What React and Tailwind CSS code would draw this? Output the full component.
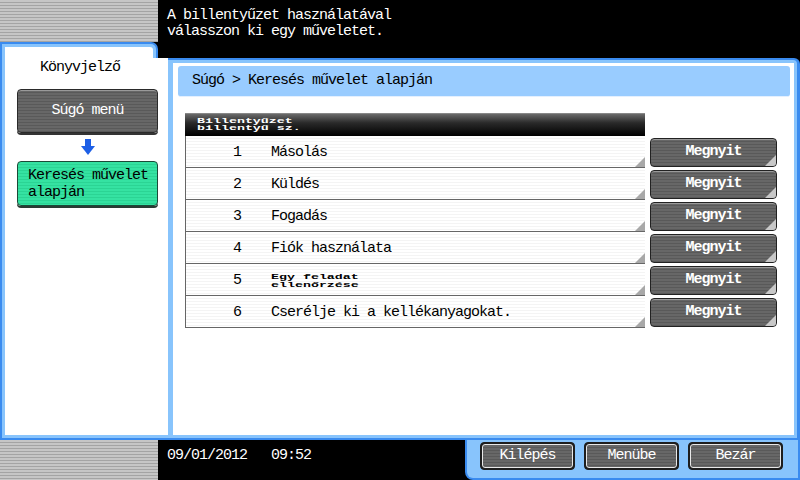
import React from 'react'

const greyStripes =
  'bg-[image:repeating-linear-gradient(to_bottom,#c6c6c6_0px,#c6c6c6_2px,#a4a4a4_2px,#a4a4a4_3px)]'
const btnStripes =
  'bg-[image:repeating-linear-gradient(to_bottom,#676767_0px,#676767_2px,#595959_2px,#595959_3px)]'
const rowStripes =
  'bg-[image:repeating-linear-gradient(to_bottom,#ffffff_0px,#ffffff_2px,#f4f4f4_2px,#f4f4f4_3px)]'

const rows = [
  { n: 1, label: 'Másolás' },
  { n: 2, label: 'Küldés' },
  { n: 3, label: 'Fogadás' },
  { n: 4, label: 'Fiók használata' },
  { n: 5, label: ['Egy feladat', 'ellenőrzése'], small: true },
  { n: 6, label: 'Cserélje ki a kellékanyagokat.' },
]

// little folded corner in the bottom right of cells and keys
const Corner = ({ color = 'bg-[#b8b8b8]', size = 'w-[10px] h-[10px]' }) => (
  <div className={`absolute right-0 bottom-0 ${size} ${color} [clip-path:polygon(100%_0,100%_100%,0_100%)]`} />
)

const Squished = ({ lines, className = '' }) => (
  <div className={`text-[13.3px] tracking-normal leading-[13px] scale-y-[0.55] ${className}`}>
    {lines.map((l) => (
      <div key={l}>{l}</div>
    ))}
  </div>
)

const BottomKey = ({ children }) => (
  <button className="w-[95px] h-[28px] rounded-[4px] border border-[#1e1e1e] bg-[#1e1e1e] p-[1px]">
    <div className={`h-full w-full rounded-[3px] border border-[#e8e8e8] ${btnStripes} flex items-center justify-center text-white`}>
      {children}
    </div>
  </button>
)

export default function App() {
  return (
    <div className="w-[800px] h-[480px] flex flex-col bg-black overflow-hidden font-['Liberation_Mono',monospace] text-[15px] tracking-[-1px]">
      {/* Top message bar */}
      <div className="flex h-[42px] shrink-0">
        <div className={`w-[158px] ${greyStripes}`} />
        <div className="flex-1 bg-black text-white pl-[9px] pt-[8px] leading-[16px]">
          <div>A billentyűzet használatával</div>
          <div>válasszon ki egy műveletet.</div>
        </div>
      </div>

      {/* Frame */}
      <div className="flex h-[398px] shrink-0">
        {/* Left bookmark tab */}
        <div className="w-[168px] flex flex-col">
          <div className="flex h-[16px] shrink-0">
            <div className="w-[158px] bg-[#3a8bef] pt-[2px] pl-[2px] pr-[2px] rounded-tr-[7px]">
              <div className="h-full bg-[#88c4fc] pt-[3px] pl-[3px] pr-[3px] rounded-tr-[5px]">
                <div className="h-full bg-white rounded-tr-[3px]" />
              </div>
            </div>
            <div className="flex-1 bg-black" />
          </div>
          <div className="flex-1 bg-[#3a8bef] pl-[2px] pb-[2px]">
            <div className="h-full bg-[#88c4fc] pl-[3px] pb-[3px]">
              <div className="h-full bg-white flex flex-col">
                <div className="w-[150px] text-center mt-[2px] leading-[16px] text-black">Könyvjelző</div>
                <div className={`ml-[12px] mt-[13px] w-[141px] h-[44px] rounded-[4px] border border-[#2a2a2a] ${btnStripes} shadow-[inset_0_1px_0_#9a9a9a,0_2px_0_#333] flex items-center justify-center text-white`}>
                  Súgó menü
                </div>
                <div className="ml-[12px] w-[141px] h-[28px] flex items-center justify-center">
                  <svg width="14" height="16" viewBox="0 0 14 16">
                    <rect x="4" y="0" width="6" height="8" fill="#1d5fe6" />
                    <polygon points="0,7 14,7 7,16" fill="#1d5fe6" />
                  </svg>
                </div>
                <div className="ml-[12px] w-[141px] h-[45px] rounded-[4px] border border-[#1b4a38] bg-[image:repeating-linear-gradient(to_bottom,#35e2a2_0px,#35e2a2_2px,#2bd494_2px,#2bd494_3px)] shadow-[0_2px_0_#2a3a33] pl-[10px] pt-[5px] leading-[17px] text-black">
                  <div>Keresés művelet</div>
                  <div>alapján</div>
                </div>
              </div>
            </div>
          </div>
        </div>

        {/* Main panel */}
        <div className="flex-1 flex flex-col">
          <div className="h-[16px] bg-black shrink-0" />
          <div className="flex-1 bg-[#3a8bef] pt-[2px] pr-[3px] pb-[2px] rounded-tr-[6px]">
            <div className="h-full bg-[#88c4fc] pt-[3px] pr-[3px] pb-[3px] pl-[5px] rounded-tr-[4px]">
              <div className="h-full bg-white flex flex-col">
                <div className="mt-[3px] ml-[5px] mr-[4px] h-[31px] rounded-[3px] bg-[#99ccff] border-b border-[#e4f0ff] flex items-center pl-[14px] text-black">
                  Súgó &gt; Keresés művelet alapján
                </div>

                {/* Table */}
                <div className="mt-[16px] ml-[12px] flex flex-col">
                  <div className="w-[460px] h-[23px] bg-[image:linear-gradient(to_bottom,#6a6a6a,#2a2a2a_40%,#000)] border-t border-[#888] flex items-center pl-[12px] text-white font-bold overflow-visible">
                    <Squished lines={['Billentyűzet', 'billentyű sz.']} />
                  </div>
                  {rows.map((r) => (
                    <div key={r.n} className="flex">
                      <div className={`relative w-[460px] h-[32px] pt-[3px] ${rowStripes} border-l border-b border-[#666] flex items-center text-black`}>
                        <div className="w-[85px] pl-[47px]">{r.n}</div>
                        {r.small ? <Squished lines={r.label} className="font-bold" /> : <div>{r.label}</div>}
                        <Corner color="bg-[#a8a8a8]" />
                      </div>
                      <div className={`relative ml-[5px] mt-[2px] w-[127px] h-[29px] rounded-[4px] border border-[#222] ${btnStripes} shadow-[inset_0_1px_0_#9a9a9a] flex items-center justify-center text-white font-bold overflow-hidden`}>
                        Megnyit
                        <Corner color="bg-[#c8c8c8]" size="w-[11px] h-[11px]" />
                      </div>
                    </div>
                  ))}
                </div>
              </div>
            </div>
          </div>
        </div>
      </div>

      {/* Bottom status bar */}
      <div className="flex flex-1">
        <div className={`w-[158px] ${greyStripes}`} />
        <div className="w-[307px] bg-black text-white flex items-start pt-[8px] pl-[9px] gap-[24px] leading-[16px]">
          <span>09/01/2012</span>
          <span>09:52</span>
        </div>
        <div className="flex-1 bg-[#3a8bef] pl-[2px] pr-[2px] pb-[2px] rounded-bl-[8px]">
          <div className="h-full bg-[#88c4fc] rounded-bl-[6px] flex items-start pt-[2px] pl-[13px] gap-[9px]">
            <BottomKey>Kilépés</BottomKey>
            <BottomKey>Menübe</BottomKey>
            <BottomKey>Bezár</BottomKey>
          </div>
        </div>
      </div>
    </div>
  )
}
